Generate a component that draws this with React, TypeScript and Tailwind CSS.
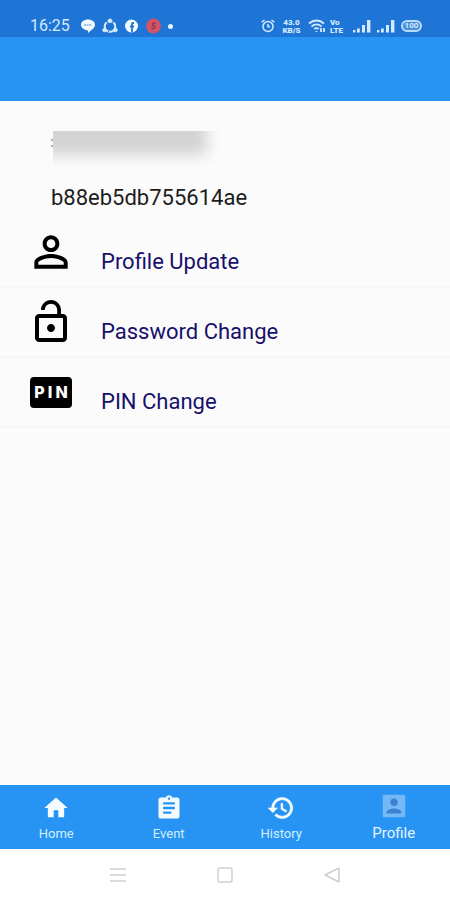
import React from 'react';

interface IconProps {
    className?: string;
}

const PersonIcon: React.FC<IconProps> = ({ className }) => (
    <svg viewBox="0 0 24 24" fill="currentColor" className={className} aria-hidden="true">
        <path d="M12 5.9a2.1 2.1 0 1 1 0 4.2 2.1 2.1 0 0 1 0-4.2m0 9c2.97 0 6.1 1.46 6.1 2.1v1.1H5.9V17c0-.64 3.13-2.1 6.1-2.1M12 4C9.79 4 8 5.79 8 8s1.79 4 4 4 4-1.79 4-4-1.79-4-4-4zm0 9c-2.67 0-8 1.34-8 4v3h16v-3c0-2.66-5.33-4-8-4z" />
    </svg>
);

const LockOpenIcon: React.FC<IconProps> = ({ className }) => (
    <svg viewBox="0 0 24 24" fill="currentColor" className={className} aria-hidden="true">
        <path d="M12 17c1.1 0 2-.9 2-2s-.9-2-2-2-2 .9-2 2 .9 2 2 2zm6-9h-1V6c0-2.76-2.24-5-5-5S7 3.24 7 6h1.9c0-1.71 1.39-3.1 3.1-3.1 1.71 0 3.1 1.39 3.1 3.1v2H6c-1.1 0-2 .9-2 2v10c0 1.1.9 2 2 2h12c1.1 0 2-.9 2-2V10c0-1.1-.9-2-2-2zm0 12H6V10h12v10z" />
    </svg>
);

const PinIcon: React.FC = () => (
    <span className="flex h-[31px] w-[42px] items-center justify-center gap-[3px] rounded bg-black font-['Inter',sans-serif] text-base font-extrabold leading-5 text-white" aria-hidden="true">
        <span>P</span>
        <span>I</span>
        <span>N</span>
    </span>
);

const HomeIcon: React.FC<IconProps> = ({ className }) => (
    <svg viewBox="0 0 24 24" fill="currentColor" className={className} aria-hidden="true">
        <path d="M10 20v-6h4v6h5v-8h3L12 3 2 12h3v8z" />
    </svg>
);

const EventIcon: React.FC<IconProps> = ({ className }) => (
    <svg viewBox="0 0 24 24" fill="currentColor" className={className} aria-hidden="true">
        <path d="M19 3h-4.18C14.4 1.84 13.3 1 12 1c-1.3 0-2.4.84-2.82 2H5c-1.1 0-2 .9-2 2v14c0 1.1.9 2 2 2h14c1.1 0 2-.9 2-2V5c0-1.1-.9-2-2-2zm-7 0c.55 0 1 .45 1 1s-.45 1-1 1-1-.45-1-1 .45-1 1-1zm2 14H7v-2h7v2zm3-4H7v-2h10v2zm0-4H7V7h10v2z" />
    </svg>
);

const HistoryIcon: React.FC<IconProps> = ({ className }) => (
    <svg viewBox="0 0 24 24" fill="currentColor" className={className} aria-hidden="true">
        <path stroke="currentColor" strokeWidth=".5" d="M13 3c-4.97 0-9 4.03-9 9H1l3.89 3.89.07.14L9 12H6c0-3.87 3.13-7 7-7s7 3.13 7 7-3.13 7-7 7c-1.93 0-3.68-.79-4.94-2.06l-1.42 1.42C8.27 19.99 10.51 21 13 21c4.97 0 9-4.03 9-9s-4.03-9-9-9zm-1 5v5l4.28 2.54.72-1.21-3.5-2.08V8H12z" />
    </svg>
);

const AccountIcon: React.FC<IconProps> = ({ className }) => (
    <svg viewBox="0 0 24 24" className={className} aria-hidden="true">
        <path fill="#3b83d2" d="M5 5h14v14H5z" />
        <path fill="currentColor" d="M3 4v16c0 .5.5 1 1 1h16c.5 0 1-.5 1-1V4c0-.5-.5-1-1-1H4c-.5 0-1 .5-1 1zm12 5c0 1.66-1.34 3-3 3s-3-1.34-3-3 1.34-3 3-3 3 1.34 3 3zm-9 8c0-2 4-3.1 6-3.1s6 1.1 6 3.1v1H6v-1z" />
    </svg>
);

const SignalIcon: React.FC = () => (
    <svg viewBox="0 0 18 14" fill="currentColor" className="h-3.5 w-[18px]" aria-hidden="true">
        <rect x="0" y="11" width="2.4" height="2.4" />
        <rect x="4" y="9.5" width="2.8" height="4" />
        <rect x="9" y="6" width="3" height="7.5" />
        <rect x="14" y="1" width="3.4" height="12.5" />
    </svg>
);

const StatusBar: React.FC = () => (
    <div className="flex h-[37px] items-end justify-between bg-[#1f75d6] pb-px pl-[30px] pr-7 text-[#d3ebff]">
        <div className="flex items-center">
            <span className="w-[50px] text-base leading-5">16:25</span>
            <svg viewBox="0 0 16 16" className="h-4 w-4" aria-hidden="true">
                <path d="M8 1.5c4 0 7 2.3 7 5.3 0 3.1-3.8 5.7-7 8.2v-2.6c-4-.2-7-2.6-7-5.6s3-5.3 7-5.3z" fill="#f2f9ff" />
                <path d="M4 7h8" stroke="#82b4e4" strokeWidth="1.6" strokeDasharray="2 .6" />
            </svg>
            <svg viewBox="0 0 16 16" className="ml-1.5 h-4 w-4" fill="none" stroke="currentColor" aria-hidden="true">
                <circle cx="8" cy="8.5" r="5.3" strokeWidth="2" />
                <circle cx="8" cy="2.8" r="1.8" fill="currentColor" />
                <circle cx="2.6" cy="12" r="1.8" fill="currentColor" />
                <circle cx="13.4" cy="12" r="1.8" fill="currentColor" />
                <path d="M4.2 2.8 5.8 5M11.8 2.8 10.2 5M6 13.5h1" stroke="#1f75d6" strokeWidth="1.2" />
            </svg>
            <svg viewBox="0 0 16 16" className="ml-1.5 h-4 w-4" aria-hidden="true">
                <circle cx="7.5" cy="8" r="6.5" fill="#f2f9ff" />
                <path d="M10 5H9c-.8 0-1 .4-1 1v8M6 8.5h4" fill="none" stroke="#1f75d6" strokeWidth="1.8" />
            </svg>
            <svg viewBox="0 0 16 16" className="ml-1.5 h-4 w-4" aria-hidden="true">
                <circle cx="7.5" cy="8" r="7.5" fill="#cf5567" />
                <path d="M9.5 5.5c-3-1.5-4 1.5-2 2.3s2 3.5-2 2.5" fill="none" stroke="#9c3450" strokeWidth="1.6" />
            </svg>
            <span className="ml-1.5 h-[5px] w-[5px] rounded-full bg-[#e6f4ff]" />
        </div>
        <div className="flex h-5 items-center">
            <svg viewBox="0 0 14 14" className="h-3.5 w-3.5" fill="none" stroke="currentColor" strokeWidth="1.5" aria-hidden="true">
                <circle cx="7" cy="7.5" r="5" />
                <path d="M.8 3.2 3.5 1M13.2 3.2 10.5 1M7 5v2.8h2" />
            </svg>
            <span className="ml-1.5 flex w-[21px] flex-col items-center text-[8px] font-black leading-[10px]">
                <span className="h-2">43.0</span>
                <span className="h-2">KB/S</span>
            </span>
            <svg viewBox="0 0 18 14" className="ml-1.5 h-3.5 w-[18px]" fill="none" stroke="currentColor" strokeWidth="1.8" aria-hidden="true">
                <path d="M1 4.5C5.5.5 11.5.5 16 4.5M3.5 7.5c3-2.5 7-2.5 10 0M6.2 10c1.500-1.200 3-1.200 4.500 0" />
                <path d="M8.5 13v-1M13 9v4M16 9v4" />
            </svg>
            <span className="ml-1 flex w-[19px] flex-col text-[8px] font-black leading-[10px]">
                <span className="h-2">Vo</span>
                <span className="h-2">LTE</span>
            </span>
            <span className="ml-1"><SignalIcon /></span>
            <span className="ml-1.5"><SignalIcon /></span>
            <span className="ml-1.5 flex h-3 w-[21px] items-center justify-center rounded-md border-2 border-[#b9dcfb] bg-[#4a8fdc] text-[8px] font-bold leading-none">
                100
            </span>
        </div>
    </div>
);

const menuItems = [
    { label: 'Profile Update', icon: <PersonIcon className="h-[50px] w-[50px]" /> },
    { label: 'Password Change', icon: <LockOpenIcon className="h-12 w-12" /> },
    { label: 'PIN Change', icon: <PinIcon /> },
];

const tabs = [
    { label: 'Home', Icon: HomeIcon },
    { label: 'Event', Icon: EventIcon },
    { label: 'History', Icon: HistoryIcon },
    { label: 'Profile', Icon: AccountIcon, active: true },
];

const App: React.FC = () => {
    return (
        <div className="flex min-h-screen flex-col bg-[#fbfbfb] font-['Roboto',sans-serif]">
            <StatusBar />
            <header className="h-16 bg-[#2794f4]" />

            <main className="flex-1 pt-[30px]">
                <div className="px-[51px]">
                    {/* account name is hidden */}
                    <div className="flex h-9">
                        <div className="mt-2 flex w-0.5 flex-col gap-1">
                            <span className="h-0.5 bg-[#b0b0b0]" />
                            <span className="h-0.5 bg-[#b0b0b0]" />
                        </div>
                        <div className="h-full w-[172px] overflow-hidden">
                            <div className="-ml-3 -mt-3 h-9 w-[166px] bg-[#d3d3d3] blur-[7px]" />
                        </div>
                    </div>
                    <p className="mt-[17px] text-[22px] leading-7 text-[#1c1c1c]">b88eb5db755614ae</p>
                </div>

                <ul className="mt-1.5">
                    {menuItems.map(({ label, icon }) => (
                        <li key={label} className="border-b-2 border-[#f5f5f5]">
                            <button type="button" className="flex h-[68px] w-full items-center pl-[26px] text-left">
                                <span className="flex w-[50px] justify-center text-black">{icon}</span>
                                <span className="ml-[25px] pt-5 text-[22px] leading-7 text-[#17106b]">{label}</span>
                            </button>
                        </li>
                    ))}
                </ul>
            </main>

            <nav className="grid h-16 grid-cols-4 bg-[#2794f4]">
                {tabs.map(({ label, Icon, active }) => (
                    <a
                        key={label}
                        href="#"
                        aria-current={active ? 'page' : undefined}
                        className={`flex flex-col items-center ${active ? 'pt-1.5' : 'pt-[9px]'}`}
                    >
                        <Icon className={active ? 'h-[30px] w-[30px] text-[#74b8f7]' : 'h-7 w-7 text-[#f4fcff]'} />
                        <span className={active ? 'mt-0.5 text-[15px] leading-5 text-[#e3f5ff]' : 'mt-1 text-[13px] leading-4 text-[#d3f0ff]'}>
                            {label}
                        </span>
                    </a>
                ))}
            </nav>

            <div className="flex h-[51px] items-center justify-center gap-[91px] bg-white text-[#cfcfcf]">
                <button type="button" aria-label="Recent apps">
                    <svg viewBox="0 0 16 16" className="h-4 w-4" stroke="currentColor" strokeWidth="1.5">
                        <path d="M0 2h16M0 8h16M0 14h16" />
                    </svg>
                </button>
                <button type="button" aria-label="Home screen">
                    <svg viewBox="0 0 16 16" className="h-4 w-4" fill="none" stroke="currentColor" strokeWidth="1.5">
                        <rect x="1" y="1" width="14" height="14" rx="2" />
                    </svg>
                </button>
                <button type="button" aria-label="Back">
                    <svg viewBox="0 0 16 16" className="h-4 w-4" fill="none" stroke="currentColor" strokeWidth="1.5" strokeLinejoin="round">
                        <path d="M15 1v14L1 8z" />
                    </svg>
                </button>
            </div>
        </div>
    );
};

export default App;
